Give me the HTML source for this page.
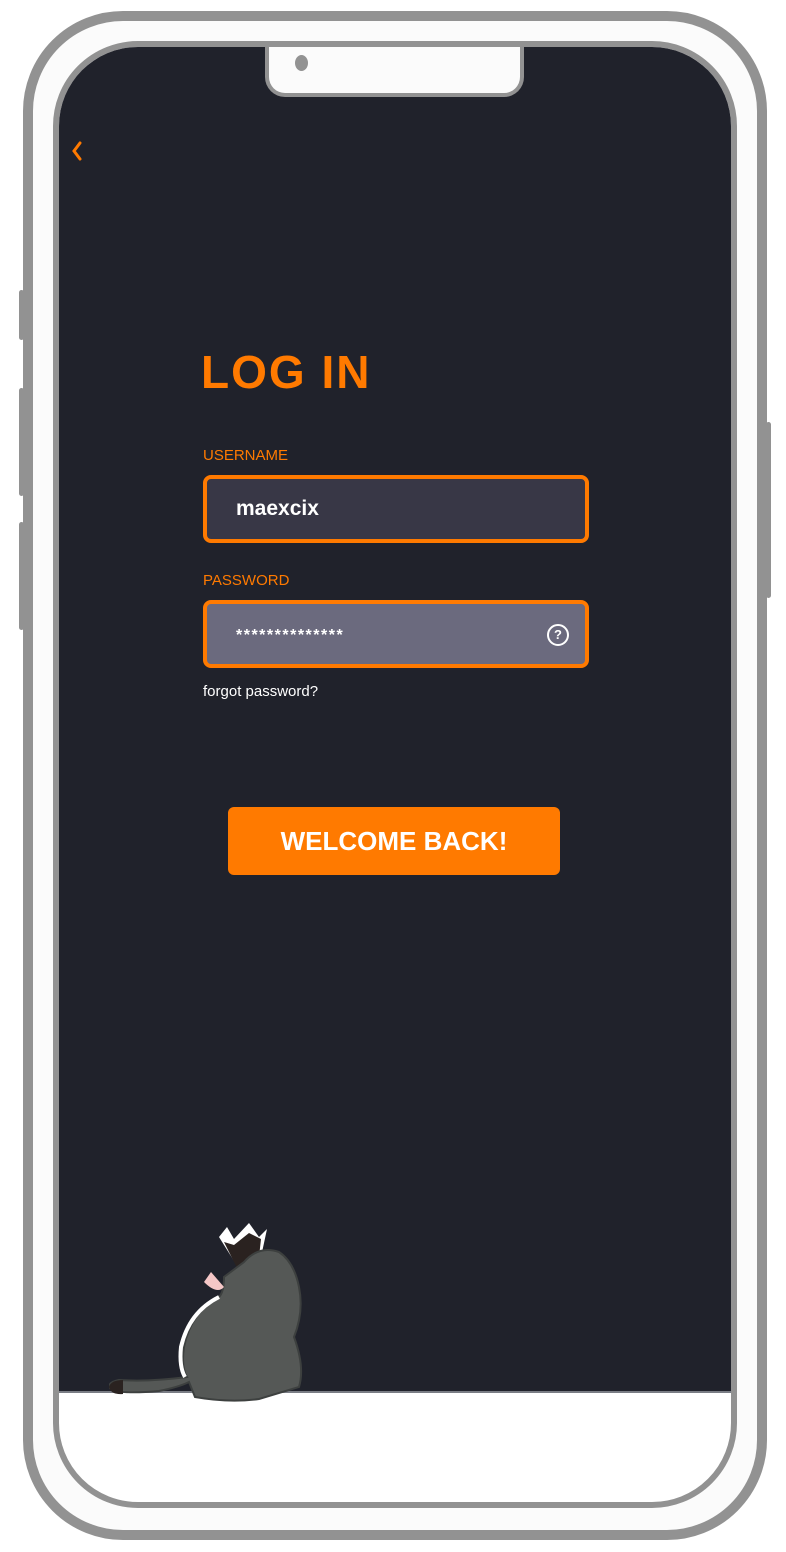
<!DOCTYPE html>
<html><head><meta charset="utf-8"><style>
*{margin:0;padding:0;box-sizing:border-box}
body{width:786px;height:1552px;background:#fff;position:relative;overflow:hidden;font-family:"Liberation Sans",sans-serif}
.abs{position:absolute}
.outer{left:23px;top:11px;width:744px;height:1529px;border:10px solid #929292;border-radius:100px;background:#fbfbfb}
.btn{background:#929292;border-radius:3px}
.screen{left:53px;top:41px;width:684px;height:1467px;border:6px solid #929292;border-radius:85px;overflow:hidden;background:#fff}
.dark{left:0;top:0;width:672px;height:1346px;background:#20222b;border-bottom:2px solid #7a7d85}
.notch{left:206px;top:-8px;width:259px;height:58px;background:#fbfbfb;border:4px solid #929292;border-top:none;border-radius:0 0 20px 20px}
.lbl{color:#ff7a00;font-size:15px;left:144px}
.inp{left:144px;width:386px;height:68px;border:4px solid #ff7a00;border-radius:8px;color:#fff;font-weight:bold;padding-left:29px;display:flex;align-items:center}
</style></head><body>
<div class="abs btn" style="left:19px;top:290px;width:5px;height:50px"></div>
<div class="abs btn" style="left:19px;top:388px;width:5px;height:108px"></div>
<div class="abs btn" style="left:19px;top:522px;width:5px;height:108px"></div>
<div class="abs btn" style="left:766px;top:422px;width:5px;height:176px"></div>
<div class="abs outer"></div>
<div class="abs screen">
 <div class="abs dark"></div>
 <div class="abs notch"></div>
 <div class="abs" style="left:236px;top:8px;width:13px;height:16px;border-radius:50%;background:#929292"></div>
 <svg class="abs" style="left:10px;top:92px" width="16" height="26"><path d="M11 4 L5 12 L11 20" stroke="#ff7a00" stroke-width="3" fill="none" stroke-linecap="round"/></svg>
 <div class="abs" style="left:142px;top:298px;color:#ff7a00;font-size:46px;font-weight:bold;letter-spacing:2px">LOG IN</div>
 <div class="abs lbl" style="top:400px">USERNAME</div>
 <div class="abs inp" style="top:428px;background:#383746;font-size:21px">maexcix</div>
 <div class="abs lbl" style="top:525px">PASSWORD</div>
 <div class="abs inp" style="top:553px;background:#6b6a7e;font-size:16px;letter-spacing:1.5px;padding-top:4px">**************
  <div class="abs" style="right:16px;top:20px;width:22px;height:22px;border:2px solid #fff;border-radius:50%;font-size:13px;text-align:center;line-height:18px;letter-spacing:0;padding-top:0">?</div></div>
 <div class="abs" style="left:144px;top:636px;color:#fff;font-size:15px">forgot password?</div>
 <div class="abs" style="left:169px;top:760px;width:332px;height:68px;background:#ff7a00;border-radius:6px;color:#fff;font-weight:bold;font-size:26px;display:flex;align-items:center;justify-content:center">WELCOME BACK!</div>
 <svg class="abs" style="left:50px;top:1170px" width="230" height="200">
  <path d="M110 20 L118 10 L125 22 L140 6 L150 20 L158 12 L152 40 L135 60 Z" fill="#fff"/>
  <path d="M115 25 L125 28 L140 16 L152 22 L150 40 L130 55 Z" fill="#2a2220"/>
  <path d="M0 170 Q5 178 50 174 Q70 170 80 165 L86 180 Q120 186 150 182 L190 170 Q196 150 185 120 Q195 95 190 70 Q185 45 170 35 Q150 28 135 45 L115 60 Q115 75 110 80 Q82 95 75 130 Q72 150 78 160 Q40 165 10 163 Q0 165 0 170 Z" fill="#555856" stroke="#3d403f" stroke-width="2"/>
  <path d="M110 80 Q80 95 72 130 Q70 150 76 160" stroke="#fff" stroke-width="4" fill="none"/>
  <path d="M0 170 Q2 178 14 177 L14 163 Q2 163 0 170Z" fill="#2a2220"/>
  <path d="M102 55 L95 65 Q108 78 115 70Z" fill="#f5c7c7"/>
 </svg>
</div>
</body></html>
